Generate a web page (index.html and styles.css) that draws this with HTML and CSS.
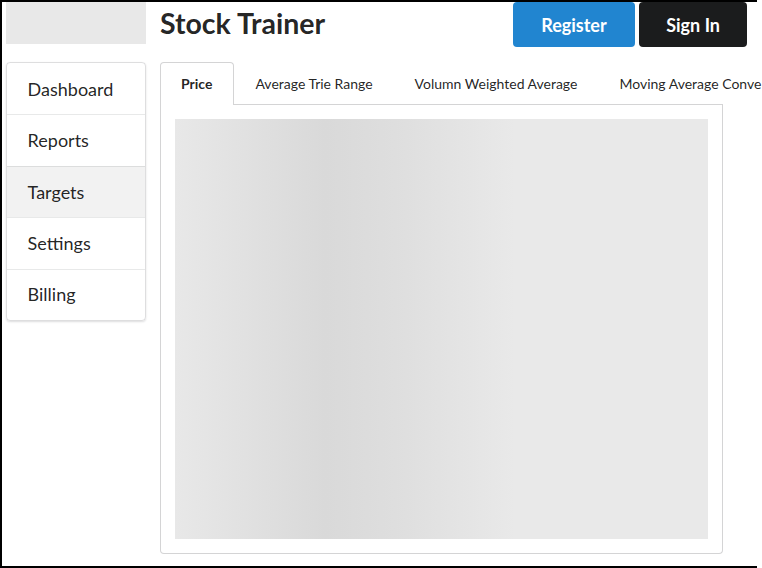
FILE: index.html
```html
<!DOCTYPE html>
<html lang="en">
<head>
<meta charset="utf-8">
<title>Stock Trainer</title>
<link rel="stylesheet" href="styles.css">
</head>
<body>
<div class="frame">
  <header class="header">
    <div class="logo"></div>
    <h1 class="title">Stock Trainer</h1>
    <div class="actions">
      <button class="btn btn-primary">Register</button>
      <button class="btn btn-black">Sign In</button>
    </div>
  </header>
  <div class="main">
    <nav class="side-menu">
      <a class="side-item">Dashboard</a>
      <a class="side-item">Reports</a>
      <a class="side-item active">Targets</a>
      <a class="side-item">Settings</a>
      <a class="side-item">Billing</a>
    </nav>
    <section class="content">
      <div class="tabs">
        <a class="tab active">Price</a>
        <a class="tab">Average Trie Range</a>
        <a class="tab">Volumn Weighted Average</a>
        <a class="tab">Moving Average Convergence Divergence</a>
      </div>
      <div class="segment">
        <div class="placeholder"></div>
      </div>
    </section>
  </div>
</div>
</body>
</html>
```
FILE: styles.css
```css
html, body {
  margin: 0;
  padding: 0;
  overflow: hidden;
  background: #fff;
}
body {
  font-family: Lato, "Helvetica Neue", Arial, sans-serif;
  color: rgba(0, 0, 0, 0.87);
}
.frame {
  box-sizing: border-box;
  width: 757px;
  height: 568px;
  border: 2px solid #000;
  border-right: none;
  padding: 0 10px 0 4px;
}
.header {
  display: grid;
  grid-template-columns: 140px 1fr auto;
  column-gap: 14px;
  align-items: start;
  height: 45px;
}
.logo {
  height: 42px;
  background: #e8e8e8;
}
.title {
  margin: 3px 0 0;
  font-size: 28.5px;
  line-height: 36px;
  font-weight: 700;
  color: rgba(0, 0, 0, 0.87);
}
.actions {
  display: flex;
  gap: 4px;
}
.btn {
  font-family: Lato, "Helvetica Neue", Arial, sans-serif;
  font-size: 18px;
  font-weight: 700;
  line-height: 1;
  height: 45px;
  padding: 0 27px;
  border: none;
  border-radius: 4px;
  color: #fff;
  cursor: pointer;
}
.btn-primary {
  background: #2185d0;
  padding: 0 28.5px;
}
.btn-black { background: #1b1c1d; }
.main {
  display: grid;
  grid-template-columns: 140px 563px;
  column-gap: 14px;
  margin-top: 15px;
  align-items: start;
}
.side-menu {
  display: flex;
  flex-direction: column;
  border: 1px solid rgba(34, 36, 38, 0.15);
  border-radius: 4px;
  box-shadow: 0 1px 2px 0 rgba(34, 36, 38, 0.15);
  overflow: hidden;
}
.side-item {
  font-size: 18px;
  line-height: 1;
  padding: 15.9px 20.6px 16.5px;
  border-top: 1px solid rgba(34, 36, 38, 0.1);
  color: rgba(0, 0, 0, 0.87);
}
.side-item:first-child {
  border-top: none;
  padding-top: 16.9px;
}
.side-item.active {
  background: rgba(0, 0, 0, 0.05);
}
.content {
  min-width: 0;
}
.tabs {
  display: flex;
  border-bottom: 1px solid #d4d4d5;
  height: 42px;
  white-space: nowrap;
}
.tab {
  flex: none;
  font-size: 14px;
  line-height: 14px;
  padding: 14px 20px 13px;
  border: 1px solid transparent;
  border-bottom: none;
  border-radius: 4px 4px 0 0;
  color: rgba(0, 0, 0, 0.87);
}
.tab.active {
  font-weight: 700;
  background: #fff;
  border-color: #d4d4d5;
  margin-bottom: -1px;
  padding: 14px 21px 14px 20px;
}
.segment {
  border: 1px solid #d4d4d5;
  border-top: none;
  border-radius: 0 0 4px 4px;
  padding: 14px;
}
.placeholder {
  height: 420px;
  background: linear-gradient(to right, #e8e8e8 0, #d9d9d9 150px, #dedede 220px, #e9e9e9 340px, #e9e9e9 100%);
}
```
